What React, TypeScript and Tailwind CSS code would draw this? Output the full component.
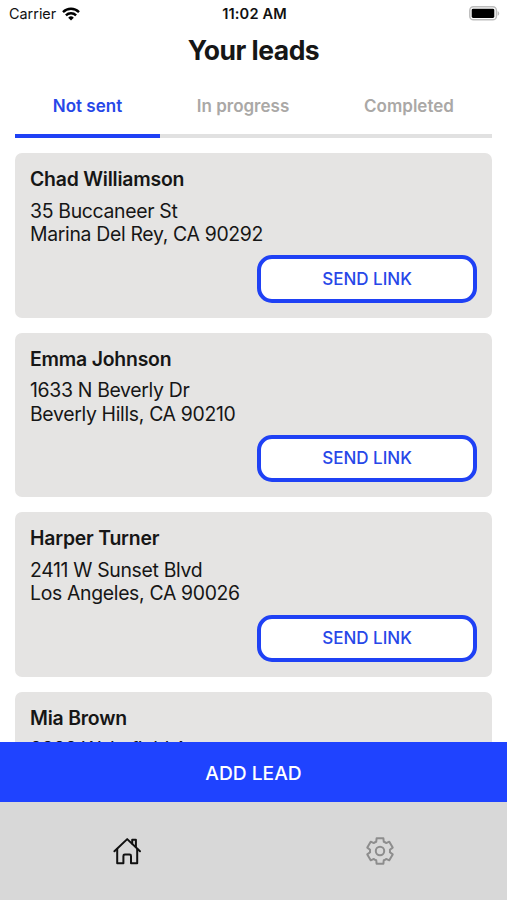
/**
 * Leads Screen
 *
 * Mobile list of leads with status tabs, an add button and bottom navigation.
 */

import { useState } from 'react';
import { clsx } from 'clsx';

const tabs = [
  { label: 'Not sent', width: 'w-[145px]' },
  { label: 'In progress', width: 'w-[166px]' },
  { label: 'Completed', width: 'w-[166px]' },
];

const leads = [
  { name: 'Chad Williamson', street: '35 Buccaneer St', city: 'Marina Del Rey, CA 90292' },
  { name: 'Emma Johnson', street: '1633 N Beverly Dr', city: 'Beverly Hills, CA 90210' },
  { name: 'Harper Turner', street: '2411 W Sunset Blvd', city: 'Los Angeles, CA 90026' },
  { name: 'Mia Brown', street: '8928 Wakefield A', city: '' },
];

type Lead = (typeof leads)[number];

function WifiIcon() {
  return (
    <svg viewBox="0 0 18 14" className="h-3.5 w-[18px]" fill="none" stroke="#000" strokeWidth="2.4">
      <path d="M1 5.1 A11.4 11.4 0 0 1 17 5.1" />
      <path d="M3.9 8.3 A7.2 7.2 0 0 1 14.1 8.3" />
      <path d="M9 13.5 L6.2 10.7 A4 4 0 0 1 11.8 10.7 Z" fill="#000" stroke="none" />
    </svg>
  );
}

function BatteryIcon() {
  return (
    <svg viewBox="0 0 31 15" className="h-[15px] w-[31px]">
      <rect x="0.8" y="0.8" width="26.6" height="13" rx="3.6" fill="#fff" stroke="#bdbdbd" strokeWidth="1.5" />
      <rect x="2.7" y="2.7" width="22.6" height="9.2" rx="1.4" fill="#000" />
      <path d="M28.6 5 A2.6 2.6 0 0 1 28.6 9.8 Z" fill="#bdbdbd" />
    </svg>
  );
}

function HomeIcon() {
  return (
    <svg
      viewBox="0 0 30 30"
      className="size-[30px]"
      fill="none"
      stroke="#111"
      strokeWidth="2"
      strokeLinecap="round"
      strokeLinejoin="round"
    >
      <path d="M2.4 15.3 L15.2 3.1 L28 15.3" />
      <path d="M5.2 13 V27.3 H11.4 V20 Q11.4 18.6 12.8 18.6 H17.6 Q19 18.6 19 20 V27.3 H25.2 V13" />
      <path d="M20.2 7.4 V3.8 H23.9 V11" />
    </svg>
  );
}

function GearIcon() {
  return (
    <svg
      viewBox="-15 -15 30 30"
      className="size-[30px]"
      fill="none"
      stroke="#8d8d8d"
      strokeWidth="2"
      strokeLinejoin="round"
    >
      <path d="M-3.8 -9.2 L-3.4 -12.7 H3.4 L3.8 -9.2 Q5 -8.8 6.1 -7.9 L9.3 -9.3 L12.7 -3.4 L9.9 -1.3 Q10.1 0 9.9 1.3 L12.7 3.4 L9.3 9.3 L6.1 7.9 Q5 8.8 3.8 9.2 L3.4 12.7 H-3.4 L-3.8 9.2 Q-5 8.8 -6.1 7.9 L-9.3 9.3 L-12.7 3.4 L-9.9 1.3 Q-10.1 0 -9.9 -1.3 L-12.7 -3.4 L-9.3 -9.3 L-6.1 -7.9 Q-5 -8.8 -3.8 -9.2 Z" />
      <circle r="4.2" />
    </svg>
  );
}

function LeadCard({ lead }: { lead: Lead }) {
  return (
    <li className="flex h-[164.6px] shrink-0 flex-col rounded-[7px] bg-[#e5e4e3] px-[15px] pt-[14px] text-[#161616]">
      <h2 className="text-[19.4px] leading-6 font-semibold tracking-[-0.2px]">{lead.name}</h2>
      <p className="mt-[8.5px] h-[47.4px] text-[19.4px] leading-[23.7px] tracking-[-0.32px]">
        {lead.street}
        <br />
        {lead.city}
      </p>
      <button className="mt-[8.5px] h-[47.5px] w-[220px] self-end rounded-[15px] border-4 border-[#1f41f5] bg-white pt-px text-[17px] font-medium text-[#2747e8]">
        SEND LINK
      </button>
    </li>
  );
}

export default function App() {
  const [activeTab, setActiveTab] = useState('Not sent');

  return (
    <div className="flex h-[900px] w-[507px] flex-col overflow-hidden bg-white font-['Inter',sans-serif]">
      {/* Status bar */}
      <div className="grid h-[27px] shrink-0 grid-cols-3 items-center pr-[7px] pl-[9px] text-[#111]">
        <div className="flex items-center gap-1.5 pt-px text-[14.4px]">
          <span>Carrier</span>
          <WifiIcon />
        </div>
        <span className="pt-[2px] text-center text-[14.6px] font-semibold tracking-[0.15px]">11:02 AM</span>
        <div className="flex justify-end">
          <BatteryIcon />
        </div>
      </div>

      <h1 className="h-[45px] shrink-0 text-center text-[26.5px] leading-[46px] font-bold tracking-[-0.5px] text-[#161616]">
        Your leads
      </h1>

      {/* Tabs */}
      <div className="mx-[15px] flex h-[66px] shrink-0">
        {tabs.map((tab) => (
          <button
            key={tab.label}
            onClick={() => setActiveTab(tab.label)}
            className={clsx(
              'border-b-4 pt-2 text-[17px] font-semibold',
              tab.width,
              activeTab === tab.label ? 'border-[#1f41f5] text-[#2747e8]' : 'border-[#e1e1e1] text-[#aaa8a6]'
            )}
          >
            {tab.label}
          </button>
        ))}
      </div>

      {/* Lead list */}
      <ul className="flex min-h-0 flex-1 flex-col gap-[15px] overflow-hidden px-[15px] pt-[15px]">
        {leads.map((lead) => (
          <LeadCard key={lead.name} lead={lead} />
        ))}
      </ul>

      <button className="h-[60px] shrink-0 bg-[#1f43ff] pt-[2px] text-[19.2px] font-medium text-white">ADD LEAD</button>

      {/* Bottom navigation */}
      <nav className="grid h-[98px] shrink-0 grid-cols-2 justify-items-center bg-[#d8d8d8] pt-[34px]">
        <HomeIcon />
        <GearIcon />
      </nav>
    </div>
  );
}
